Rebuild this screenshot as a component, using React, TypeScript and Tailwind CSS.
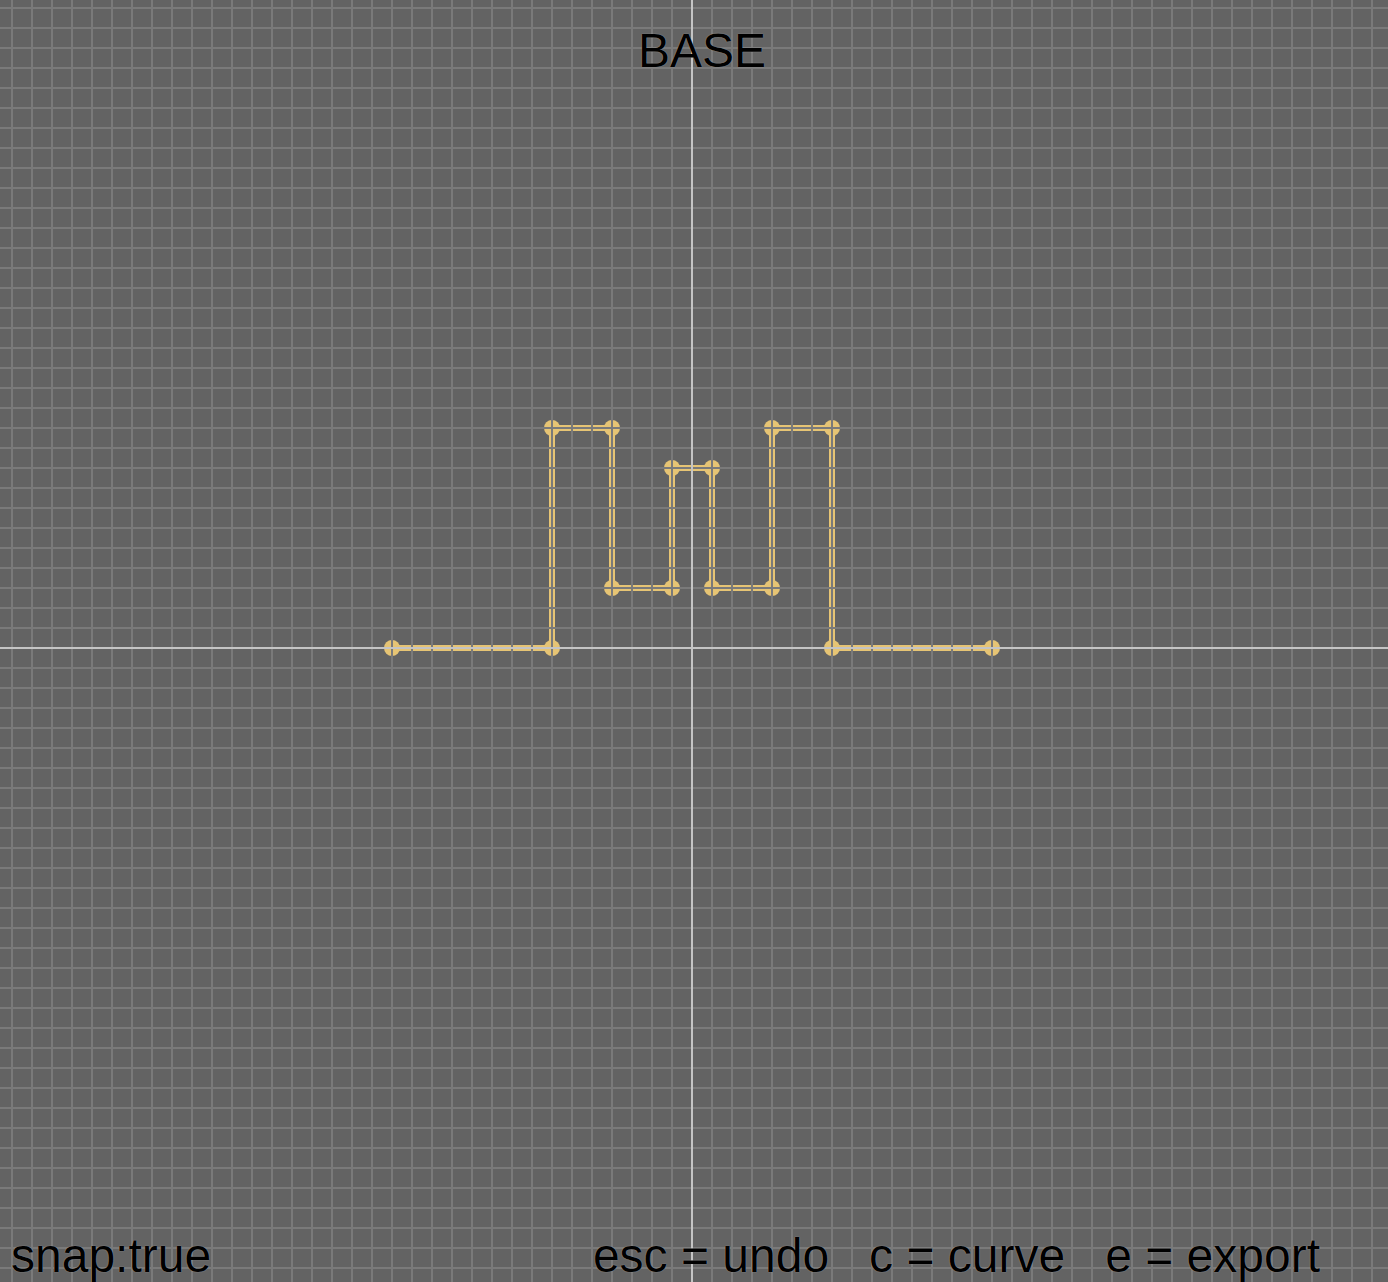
import React from 'react'

const W = 1388
const H = 1282
const OX = 692
const OY = 648

// vertices of the drawn shape, in canvas pixels
const points: [number, number][] = [
  [392, 648], [552, 648], [552, 428], [612, 428], [612, 588], [672, 588], [672, 468],
  [712, 468], [712, 588], [772, 588], [772, 428], [832, 428], [832, 648], [992, 648],
]

const xs = Array.from({ length: 70 }, (_, i) => 12 + i * 20).filter((x) => x !== OX)
const ys = Array.from({ length: 65 }, (_, i) => 8 + i * 20).filter((y) => y !== OY)

function Canvas() {
  const d = points.map(([x, y], i) => `${i === 0 ? 'M' : 'L'}${x} ${y}`).join(' ')
  return (
    <svg width={W} height={H} viewBox={`0 0 ${W} ${H}`} className="absolute inset-0">
      <rect width={W} height={H} fill="#636363" />
      <path d={d} fill="none" stroke="#e6c474" strokeWidth={6} strokeLinejoin="miter" />
      {points.map(([x, y], i) => (
        <circle key={i} cx={x} cy={y} r={8} fill="#e6c474" />
      ))}
      <g shapeRendering="crispEdges" fill="#7a7a7a">
        {xs.map((x) => (
          <rect key={'v' + x} x={x - 1} y={0} width={2} height={H} />
        ))}
        {ys.map((y) => (
          <rect key={'h' + y} x={0} y={y - 1} width={W} height={2} />
        ))}
      </g>
      <g shapeRendering="crispEdges" fill="#c4c4c4">
        <rect x={OX - 1} y={0} width={2} height={H} />
        <rect x={0} y={OY - 1} width={W} height={2} />
      </g>
    </svg>
  )
}

export default function App() {
  return (
    <div
      className="relative w-[1388px] h-[1282px] overflow-hidden bg-[#636363] text-black"
      style={{ fontFamily: '"Liberation Sans", Arial, sans-serif' }}
    >
      <Canvas />
      <div className="absolute inset-0 flex flex-col justify-between text-[48px] leading-[48px] [text-shadow:0_0_1px_rgba(220,220,220,0.7)]">
        <div className="pt-[27px] pl-[16px] text-center">BASE</div>
        <div className="flex justify-between pl-[11px] pr-[68px] pb-[2px] whitespace-pre">
          <span>snap:true</span>
          <span>esc = undo   c = curve   e = export</span>
        </div>
      </div>
    </div>
  )
}
